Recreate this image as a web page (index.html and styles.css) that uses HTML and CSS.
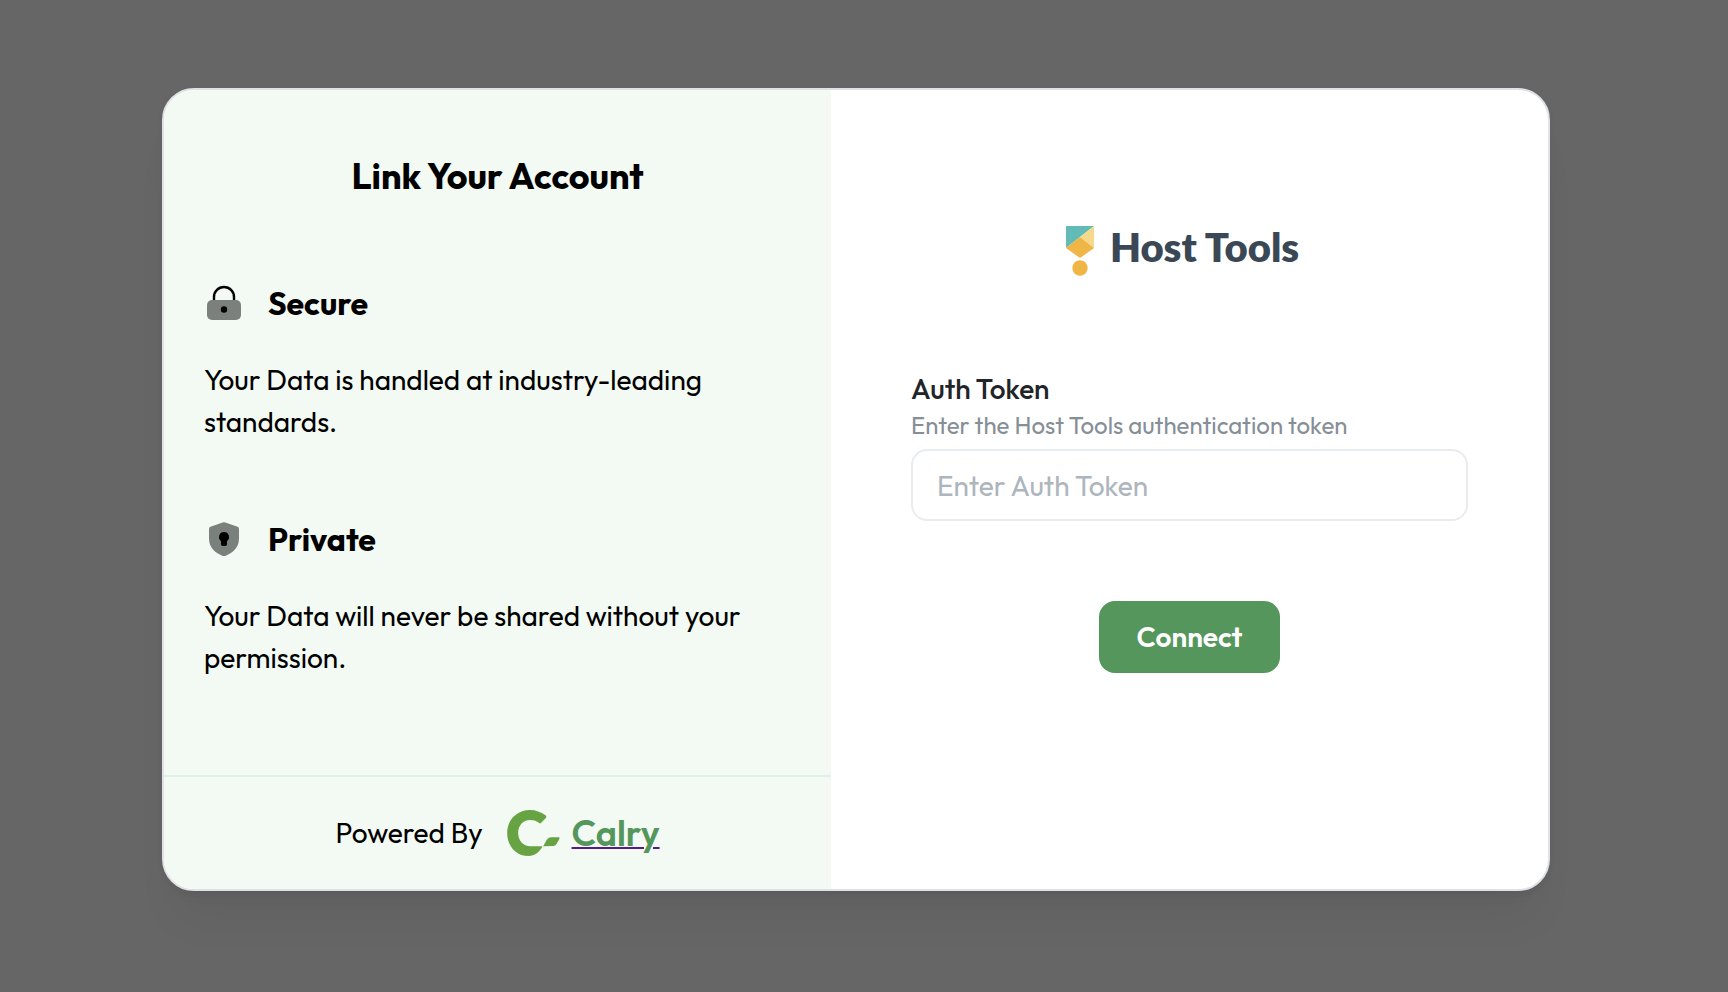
FILE: index.html
```html
<!DOCTYPE html>
<html lang="en">
<head>
<meta charset="utf-8">
<meta name="viewport" content="width=device-width, initial-scale=1">
<title>Link Your Account</title>
<link rel="stylesheet" href="styles.css">
</head>
<body>
<main class="card">
  <section class="about">
    <div class="about-body">
      <h1 class="title">Link Your Account</h1>
      <div class="feature">
        <h2 class="feature-title">
          <svg class="feature-icon" viewBox="0 0 40 40" aria-hidden="true">
            <path d="M10 19v-5a10 10 0 0 1 20 0v5" fill="none" stroke="#000" stroke-width="2.4"/>
            <rect x="3" y="17" width="34" height="20" rx="5" fill="#7a807b"/>
            <circle cx="20" cy="26.5" r="3.2" fill="#000"/>
          </svg>
          Secure
        </h2>
        <p class="feature-text">Your Data is handled at industry-leading standards.</p>
      </div>
      <div class="feature">
        <h2 class="feature-title">
          <svg class="feature-icon" viewBox="0 0 40 40" aria-hidden="true">
            <path d="M18.6 3.5q1.4-.5 2.8 0L33.500 7.700q1.500.6 1.500 2.200V19.500c0 10-7 14.500-13.200 17.200q-1.800.7-3.600 0C12 34 5 29.500 5 19.500V9.900q0-1.600 1.500-2.200z" fill="#7a807b"/>
            <path d="M20 13a5 5 0 0 1 3 9v3.200q0 1.800-1.800 1.800h-2.400q-1.800 0-1.800-1.800V22a5 5 0 0 1 3-9z" fill="#000"/>
          </svg>
          Private
        </h2>
        <p class="feature-text">Your Data will never be shared without your permission.</p>
      </div>
    </div>
    <footer class="powered">
      <span>Powered By</span>
      <a class="brand" href="#">
        <svg class="brand-icon" viewBox="0 0 158 138" aria-hidden="true">
          <path d="M114 15q6 4 2 9l-14 14q-3 3-7 0C87 32 79 30 68 30C47 30 33 47 33 69C33 91 48 109 70 109H106C97 127 83 138 64 138C27 138 0 108 0 69C0 30 29 0 68 0C86 0 101 6 114 15z" fill="#67a342"/>
          <path d="M108 109L119 89Q124 82 132 82H154Q158 82 157 86L148 102Q145 108 138 108z" fill="#67a342"/>
        </svg>
        <span class="brand-name">Calry</span>
      </a>
    </footer>
  </section>
  <section class="connect">
    <div class="partner">
      <svg class="partner-icon" viewBox="0 0 28 50" aria-hidden="true">
        <path d="M0 0H28L0 22z" fill="#62bbb7"/>
        <path d="M28 0V22L14 11z" fill="#f5d98b"/>
        <path d="M14 11L28 22L14 32L0 22z" fill="#efb545"/>
        <circle cx="14" cy="42" r="7.700" fill="#efb545"/>
      </svg>
      <span class="partner-name">Host Tools</span>
    </div>
    <form class="form">
      <label class="label" for="token">Auth Token</label>
      <p class="hint" id="token-hint">Enter the Host Tools authentication token</p>
      <input class="input" id="token" type="text" placeholder="Enter Auth Token" aria-describedby="token-hint">
      <button class="button" type="button">Connect</button>
    </form>
  </section>
</main>
</body>
</html>
```
FILE: styles.css
```css
* {
  box-sizing: border-box;
}

body {
  margin: 0;
  min-height: 100vh;
  padding: 88px 178px 96px 162px;
  background: #666;
  color: #000;
  font-family: Outfit, Lato, sans-serif;
  font-size: 28px;
  line-height: 42px;
}

h1,
h2,
p {
  margin: 0;
}

.card {
  display: flex;
  overflow: hidden;
  border: 2px solid #dee2e6;
  border-radius: 32px;
  background: #fff;
  box-shadow: 0 2px 6px rgba(0, 0, 0, 0.05), 0 40px 46px -14px rgba(0, 0, 0, 0.05), 0 14px 14px -10px rgba(0, 0, 0, 0.04);
}

.about {
  display: flex;
  flex: 0 0 48.2%;
  flex-direction: column;
  background: #f3faf4;
}

.about-body {
  display: flex;
  flex: 1;
  flex-direction: column;
  gap: 72px;
  padding: 59px 40px 96px;
}

.title {
  margin-bottom: 4px;
  font-size: 36px;
  line-height: 54px;
  font-weight: 700;
  text-align: center;
}

.feature {
  display: flex;
  flex-direction: column;
  gap: 32px;
}

.feature-title {
  display: flex;
  align-items: center;
  gap: 24px;
  font-size: 32px;
  line-height: 48px;
  font-weight: 700;
}

.feature-icon {
  width: 40px;
  height: 40px;
}

.powered {
  display: flex;
  align-items: center;
  justify-content: center;
  gap: 24px;
  padding: 32px;
  border-top: 2px solid #e0f0e6;
}

.brand {
  display: flex;
  align-items: center;
  gap: 12px;
  line-height: 48px;
  text-decoration: none;
}

.brand-icon {
  width: 53px;
  height: 46px;
}

.brand-name {
  color: #54965c;
  font-size: 36px;
  font-weight: 600;
  text-decoration: underline #551a8b 2px;
}

.connect {
  display: flex;
  flex: 1;
  flex-direction: column;
  padding: 136px 80px 80px;
}

.partner {
  display: flex;
  align-items: flex-start;
  justify-content: center;
  gap: 16px;
  padding-right: 14px;
}

.partner-icon {
  width: 28px;
  height: 50px;
}

.partner-name {
  color: #3a4856;
  font-family: Lato, sans-serif;
  font-size: 40px;
  font-weight: 800;
}

.form {
  display: flex;
  flex-direction: column;
  padding-top: 92px;
}

.label {
  color: #212529;
  font-weight: 500;
}

.hint {
  color: #868e96;
  font-size: 24px;
  line-height: 30px;
}

.input {
  width: 100%;
  height: 72px;
  margin: 9px 0 80px;
  padding: 0 24px;
  border: 2px solid #e9ecef;
  border-radius: 16px;
  background: #fff;
  color: #212529;
  font: inherit;
}

.input::placeholder {
  color: #adb5bd;
  opacity: 1;
}

.button {
  align-self: center;
  height: 72px;
  padding: 0 38px;
  border: 0;
  border-radius: 16px;
  background: #54965c;
  color: #fff;
  font: inherit;
  font-weight: 600;
}
```
